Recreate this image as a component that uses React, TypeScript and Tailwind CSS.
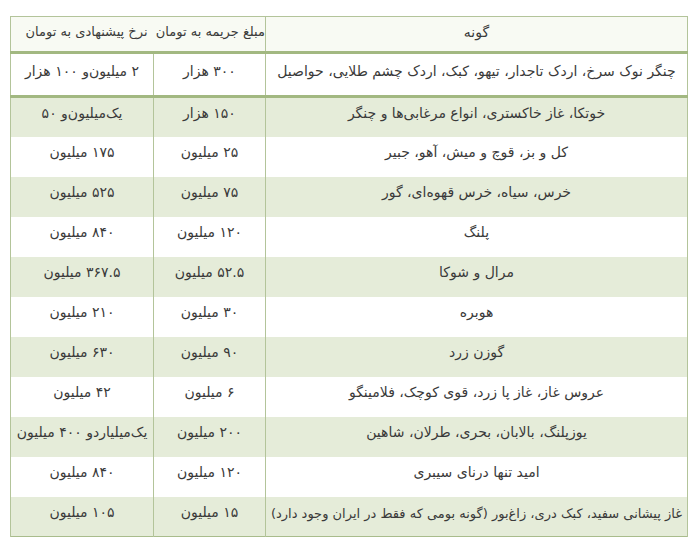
// جدول جریمه شکار گونه‌های حیات وحش

const rows: { name: string; fine: string; offer: string }[] = [
  { name: 'خوتکا، غاز خاکستری، انواع مرغابی‌ها و چنگر', fine: '۱۵۰ هزار', offer: 'یک‌میلیون‌و ۵۰' },
  { name: 'کل و بز، قوچ و میش، آهو، جبیر', fine: '۲۵ میلیون', offer: '۱۷۵ میلیون' },
  { name: 'خرس، سیاه، خرس قهوه‌ای، گور', fine: '۷۵ میلیون', offer: '۵۲۵ میلیون' },
  { name: 'پلنگ', fine: '۱۲۰ میلیون', offer: '۸۴۰ میلیون' },
  { name: 'مرال و شوکا', fine: '۵۲.۵ میلیون', offer: '۳۶۷.۵ میلیون' },
  { name: 'هوبره', fine: '۳۰ میلیون', offer: '۲۱۰ میلیون' },
  { name: 'گوزن زرد', fine: '۹۰ میلیون', offer: '۶۳۰ میلیون' },
  { name: 'عروس غاز، غاز پا زرد، قوی کوچک، فلامینگو', fine: '۶ میلیون', offer: '۴۲ میلیون' },
  { name: 'یوزپلنگ، بالابان، بحری، طرلان، شاهین', fine: '۲۰۰ میلیون', offer: 'یک‌میلیاردو ۴۰۰ میلیون' },
  { name: 'امید تنها درنای سیبری', fine: '۱۲۰ میلیون', offer: '۸۴۰ میلیون' },
  { name: 'غاز پیشانی سفید، کبک دری، زاغ‌بور (گونه بومی که فقط در ایران وجود دارد)', fine: '۱۵ میلیون', offer: '۱۰۵ میلیون' },
]

export default function App() {
  return (
    <div
      className="w-[690px] h-[551px] bg-white pt-[16px] pl-[10px] text-[#3a3a3a] text-[14px]"
      style={{ fontFamily: '"DejaVu Sans", "Noto Sans", sans-serif' }}
    >
      <table dir="rtl" className="w-[677px] border-collapse table-fixed">
        <colgroup>
          <col className="w-[422px]" />
          <col className="w-[112px]" />
          <col className="w-[143px]" />
        </colgroup>
        <thead>
          <tr className="h-[36px] bg-[#f8faf3] border-b-[3px] border-[#a2b881]">
            <td className="border border-[#b3c49a] text-center align-middle pb-1">گونه</td>
            <td
              colSpan={2}
              className="border border-[#b3c49a] text-right pr-0 pl-1 align-middle pb-1 whitespace-nowrap overflow-hidden text-[13px]"
            >
              مبلغ جریمه به تومان&nbsp;&nbsp;نرخ پیشنهادی به تومان
            </td>
          </tr>
        </thead>
        <tbody>
          <tr className="h-[44px] bg-white border-b-[3px] border-[#a2b881]">
            <td className="border-x border-[#b3c49a] text-center align-top pt-[7px] whitespace-nowrap">
              چنگر نوک سرخ، اردک تاجدار، تیهو، کبک، اردک چشم طلایی، حواصیل
            </td>
            <td className="border-x border-[#b3c49a] text-center align-top pt-[7px]">۳۰۰ هزار</td>
            <td className="border-x border-[#b3c49a] text-center align-top pt-[7px]">۲ میلیون‌و ۱۰۰ هزار</td>
          </tr>
          {rows.map((r, i) => {
            const last = i === rows.length - 1
            return (
              <tr
                key={i}
                className={`h-[40px] ${i % 2 === 0 ? 'bg-[#e5ecd9]' : 'bg-white'} ${
                  last ? 'border-b border-[#a9bc8c]' : ''
                }`}
              >
                <td
                  className={`border-x border-[#b3c49a] text-center align-top whitespace-nowrap overflow-hidden ${
                    last ? 'text-[13px] pt-[7px]' : 'pt-[5px]'
                  }`}
                >
                  {r.name}
                </td>
                <td className="border-x border-[#b3c49a] text-center align-top pt-[5px] whitespace-nowrap">
                  {r.fine}
                </td>
                <td className="border-x border-[#b3c49a] text-center align-top pt-[5px] whitespace-nowrap">
                  {r.offer}
                </td>
              </tr>
            )
          })}
        </tbody>
      </table>
    </div>
  )
}
